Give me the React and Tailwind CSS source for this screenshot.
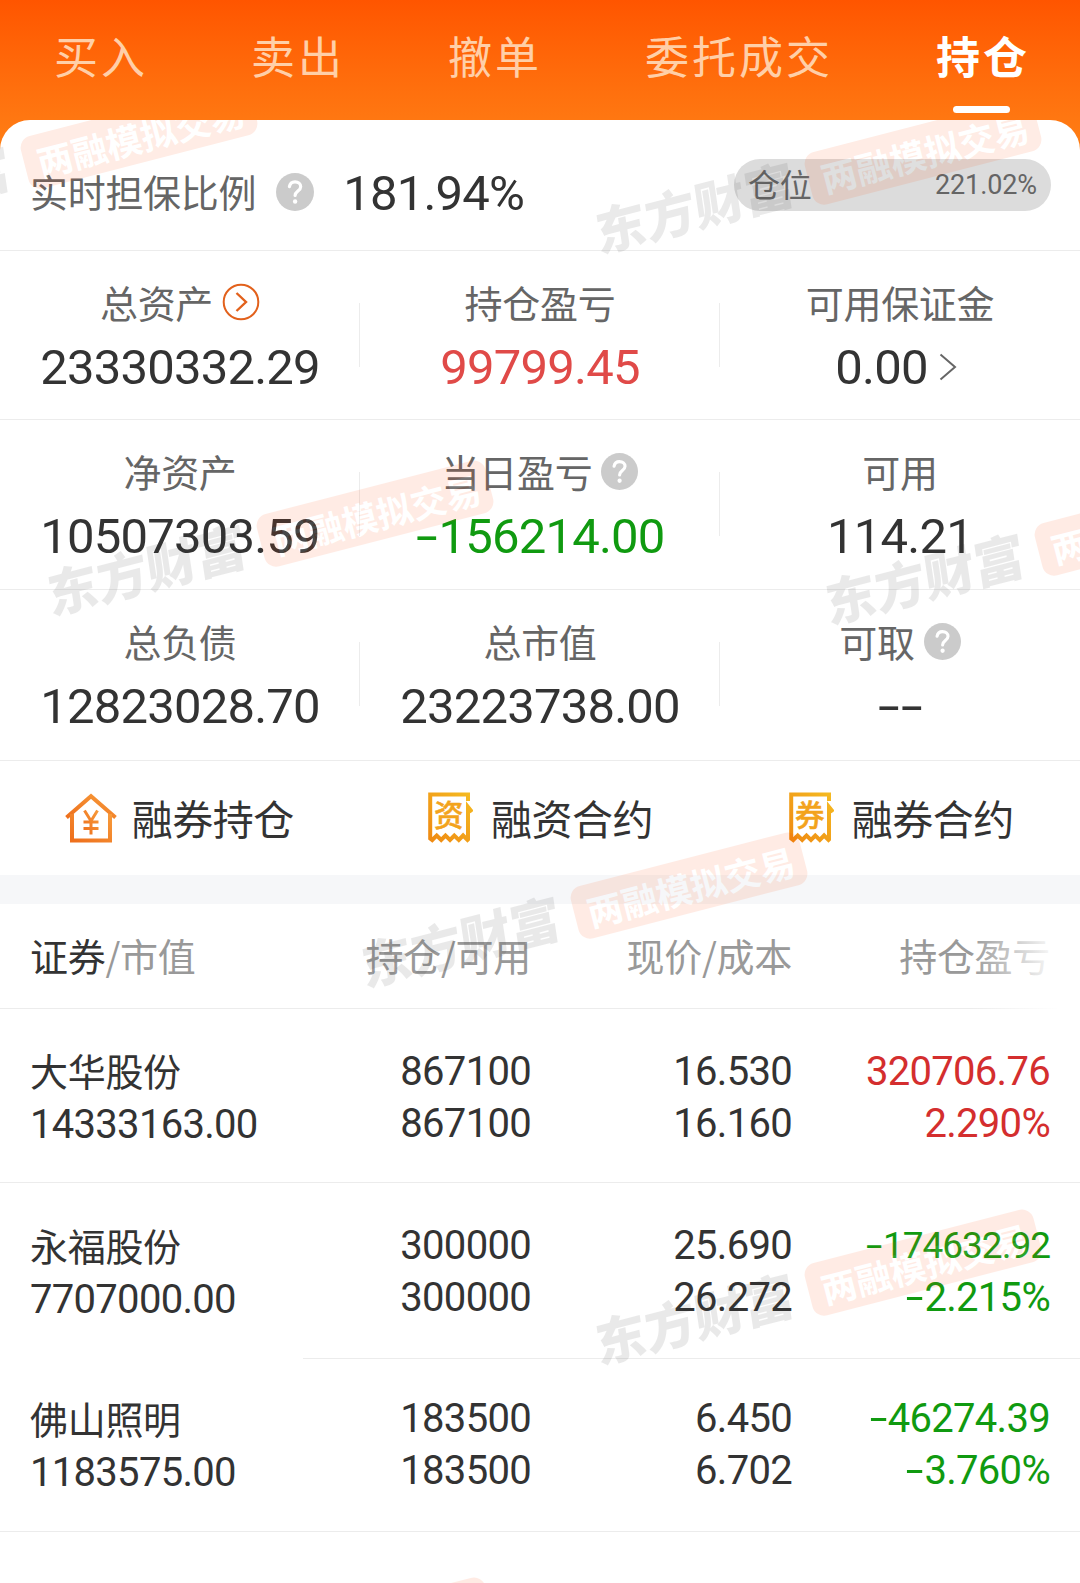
import clsx from "clsx";

const tabs = ["买入", "卖出", "撤单", "委托成交", "持仓"];

const stats = [
  [
    { label: "总资产", value: "23330332.29", more: true },
    { label: "持仓盈亏", value: "99799.45", color: "text-[#e04a48]" },
    { label: "可用保证金", value: "0.00", link: true },
  ],
  [
    { label: "净资产", value: "10507303.59" },
    { label: "当日盈亏", value: "-156214.00", color: "text-[#109a10]", help: true },
    { label: "可用", value: "114.21" },
  ],
  [
    { label: "总负债", value: "12823028.70" },
    { label: "总市值", value: "23223738.00" },
    { label: "可取", value: "--", help: true },
  ],
];

const statHeights = ["h-[169px]", "h-[170px]", "h-[171px]"];

const holdings = [
  {
    name: "大华股份",
    value: "14333163.00",
    amount: ["867100", "867100"],
    price: ["16.530", "16.160"],
    profit: ["320706.76", "2.290%"],
    color: "text-[#d42e2e]",
    size: "h-[174px] pt-[37px]",
    offset: "-mt-[2px]",
  },
  {
    name: "永福股份",
    value: "7707000.00",
    amount: ["300000", "300000"],
    price: ["25.690", "26.272"],
    profit: ["-174632.92", "-2.215%"],
    color: "text-[#109a10]",
    size: "h-[176px] pt-[37px]",
    offset: "-mt-px",
    small: true,
    shortLine: true,
  },
  {
    name: "佛山照明",
    value: "1183575.00",
    amount: ["183500", "183500"],
    price: ["6.450", "6.702"],
    profit: ["-46274.39", "-3.760%"],
    color: "text-[#109a10]",
    size: "h-[173px] pt-[34px]",
    offset: "-mt-px",
  },
];

const watermarks = [
  { x: 33, y: 43 },
  { x: 817, y: 59 },
  { x: 269, y: 421 },
  { x: 1047, y: 430 },
  { x: 583, y: 793 },
  { x: 817, y: 1170 },
  { x: 269, y: 1538 },
];

// the minus sign is drawn wider than the font's own hyphen
const Num = ({ children, className }) => (
  <span className={clsx("font-['Roboto',sans-serif] whitespace-nowrap", className)}>
    {children
      .split(/(-)/)
      .filter(Boolean)
      .map((part, i) =>
        part === "-" ? (
          <span key={i} className="inline-block w-[0.47em] text-center tracking-normal">
            <span className="inline-block scale-x-[1.6]">-</span>
          </span>
        ) : (
          part
        )
      )}
  </span>
);

const HelpIcon = ({ className }) => (
  <svg viewBox="0 0 38 38" className={className}>
    <circle cx="19" cy="19" r="19" fill="#cbcbcb" />
    <path
      d="M13.4 13.6c.6-3.200 2.700-4.800 5.600-4.800 3.300 0 5.700 2 5.700 4.900 0 4.200-5.600 4.500-5.600 8.800"
      fill="none"
      stroke="#fff"
      strokeWidth="3.200"
      strokeLinecap="round"
    />
    <circle cx="19.100" cy="28.500" r="2.200" fill="#fff" />
  </svg>
);

const CircleArrow = () => (
  <svg viewBox="0 0 38 38" className="size-[38px]">
    <circle cx="19" cy="19" r="17.300" fill="none" stroke="#e2611c" strokeWidth="2" />
    <path d="M14.500 10l9.500 9-9.500 9" fill="none" stroke="#e2611c" strokeWidth="2.400" />
  </svg>
);

const HouseIcon = () => (
  <svg viewBox="0 0 52 52" className="h-[52px] w-[52px]">
    <defs>
      <linearGradient id="house" x1="0" y1="1" x2="1" y2="0">
        <stop offset="0" stopColor="#ee6f1c" />
        <stop offset="1" stopColor="#f79a3a" />
      </linearGradient>
    </defs>
    <g fill="none" stroke="url(#house)" strokeWidth="4">
      <path d="M1.500 25.500L26 4.200l24.500 21.300" />
      <path d="M7 22v26.500h38V22" />
      <path d="M19.500 18.500L26 29l6.500-10.500M26 28.500v14M18.500 30h15M18.500 36.500h15" strokeWidth="3" />
    </g>
  </svg>
);

const ReceiptIcon = ({ char }) => (
  <svg viewBox="0 0 46 52" className="h-[52px] w-[46px]">
    <defs>
      <linearGradient id="receipt" x1="0" y1="1" x2="1" y2="0">
        <stop offset="0" stopColor="#ef8a12" />
        <stop offset="1" stopColor="#f5bb22" />
      </linearGradient>
    </defs>
    <path
      d="M41 9V2.500H3.200V46.500l2 1.500 4.500-4.500 4.500 4.500 4.300-4.500 4.500 4.500 4.300-4.500 4.500 4.500 4.300-4.500 4.400 4.500.5-.500V15l4 5"
      fill="none"
      stroke="url(#receipt)"
      strokeWidth="4"
    />
    <text
      x="21.500"
      y="34"
      textAnchor="middle"
      fontSize="29.500"
      fontWeight="500"
      fill="#f3a31c"
      stroke="#f3a31c"
      strokeWidth="0.500"
      fontFamily="'Noto Sans CJK SC', sans-serif"
    >
      {char}
    </text>
  </svg>
);

const actions = [
  { label: "融券持仓", icon: <HouseIcon />, gap: "gap-[15px] pr-[2px]" },
  { label: "融资合约", icon: <ReceiptIcon char="资" />, gap: "gap-[18px] pr-[2px]" },
  { label: "融券合约", icon: <ReceiptIcon char="券" />, gap: "gap-[18px]" },
];

const Watermark = ({ x, y }) => (
  <div
    className="absolute flex h-[54px] w-[455px] -translate-x-1/2 -translate-y-1/2 -rotate-[14.5deg] items-center justify-between opacity-10"
    style={{ left: x, top: y }}
  >
    <span className="mb-[10px] -skew-x-6 text-[51px] leading-none font-black whitespace-nowrap text-[#333]">
      东方财富
    </span>
    <span className="flex h-[54px] w-[236px] items-center justify-center rounded-xl bg-[#ff4500] pt-[2px] pl-[3px] text-[35.500px] leading-none font-bold whitespace-nowrap text-white">
      两融模拟交易
    </span>
  </div>
);

const StatCell = ({ stat, divider }) => (
  <div className="relative flex flex-1 flex-col items-center pt-[26px]">
    <div className="flex h-[50px] items-center gap-[9px] text-[38px] leading-[50px] tracking-[-0.3px] text-[#666]">
      {stat.label}
      {stat.more && <CircleArrow />}
      {stat.help && <HelpIcon className="size-[37px]" />}
    </div>
    <div className="mt-[16px] flex h-[50px] items-center gap-[11px]">
      <Num
        className={clsx(
          "text-[49px] leading-[50px] tracking-[-0.8px]",
          stat.color || "text-[#333]"
        )}
      >
        {stat.value}
      </Num>
      {stat.link && (
        <svg viewBox="0 0 18 28" className="mr-[8px] mb-[3px] h-[28px] w-[18px]">
          <path d="M1.500 1.500L16 14 1.500 26.500" fill="none" stroke="#666" strokeWidth="2" />
        </svg>
      )}
    </div>
    {divider && <div className="absolute top-[52px] right-0 h-[64px] w-px bg-[#ececec]" />}
  </div>
);

const Pair = ({ values, className, small }) => (
  <div className={clsx("flex flex-col text-right text-[40px] leading-[52px]", className)}>
    <Num className={clsx("h-[52px]", small ? "text-[37px] tracking-[-1px]" : "tracking-[-0.7px]")}>
      {values[0]}
    </Num>
    <Num className="h-[52px] tracking-[-0.7px]">{values[1]}</Num>
  </div>
);

const HoldingRow = ({ item }) => (
  <div className={clsx("relative flex px-[30px]", item.size)}>
    <div className={clsx("w-[270px] leading-[52px] text-[#333]", item.offset)}>
      <div className="h-[55px] text-[38px] tracking-[-0.3px]">{item.name}</div>
      <Num className="block text-[40px] tracking-[-0.7px]">{item.value}</Num>
    </div>
    <Pair values={item.amount} className="w-[231px] text-[#333]" />
    <Pair values={item.price} className="w-[261px] text-[#333]" />
    <Pair values={item.profit} small={item.small} className={clsx("flex-1", item.color)} />
    <div
      className={clsx(
        "absolute right-0 bottom-0 h-px bg-[#ececec]",
        item.shortLine ? "left-[303px]" : "left-0"
      )}
    />
  </div>
);

const App = () => {
  return (
    <div className="h-[1583px] w-[1080px] overflow-hidden bg-linear-to-b from-[#ff5500] from-0% to-[#ff7f15] to-[150px] font-['Noto_Sans_CJK_SC',sans-serif]">
      <nav className="flex h-[120px] justify-between pr-[50px] pl-[54px] text-[44px] leading-[66px] tracking-[3px] text-[#ffcfa8]">
        {tabs.map((tab, i) => (
          <div
            key={tab}
            className={clsx(
              "flex flex-col items-center pt-[22px]",
              i === 4 && "font-bold text-white"
            )}
          >
            {tab}
            {i === 4 && <div className="mt-[18px] mr-[3px] h-[7px] w-[57px] rounded-full bg-white" />}
          </div>
        ))}
      </nav>

      <main className="relative h-[1463px] overflow-hidden rounded-t-[30px] bg-white">
        <section className="flex h-[131px] items-start border-b border-[#ececec] pr-[29px] pl-[30px]">
          <span className="mt-[46px] text-[38px] leading-[50px] tracking-[-0.3px] text-[#666]">
            实时担保比例
          </span>
          <HelpIcon className="mt-[53px] ml-[20px] size-[38px]" />
          <Num className="mt-[49px] ml-[29px] text-[49px] leading-[50px] tracking-[-0.8px] text-[#333]">
            181.94%
          </Num>
          <div className="mt-[39px] ml-auto flex h-[52px] w-[317px] items-center justify-between rounded-full bg-[#dcdcdc] px-[14px] text-[#666]">
            <span className="pb-[4px] text-[32px] leading-[48px] tracking-[-0.3px]">仓位</span>
            <Num className="text-[27px] tracking-[-0.1px]">221.02%</Num>
          </div>
        </section>

        {stats.map((row, i) => (
          <section key={i} className={clsx("flex border-b border-[#ececec]", statHeights[i])}>
            {row.map((stat, j) => (
              <StatCell key={stat.label} stat={stat} divider={j < 2} />
            ))}
          </section>
        ))}

        <section className="flex h-[114px]">
          {actions.map((action) => (
            <div
              key={action.label}
              className={clsx(
                "flex flex-1 items-center justify-center text-[41px] tracking-[-0.5px] text-[#333]",
                action.gap
              )}
            >
              {action.icon}
              <span className="pb-[3px] leading-[60px]">{action.label}</span>
            </div>
          ))}
        </section>

        <div className="h-[29px] bg-[#f6f7f9]" />

        <section className="relative flex h-[105px] items-center border-b border-[#ececec] px-[30px] pb-[4px] text-[38px] tracking-[-0.3px] text-[#999]">
          <div className="w-[270px]">
            <span className="text-[#333]">证券</span>/市值
          </div>
          <div className="w-[231px] text-right">持仓/可用</div>
          <div className="w-[261px] text-right">现价/成本</div>
          <div className="flex-1 text-right">持仓盈亏</div>
          <div className="absolute top-0 right-0 -bottom-px w-[110px] bg-linear-to-r from-white/0 to-white to-[88px]" />
        </section>

        {holdings.map((item) => (
          <HoldingRow key={item.name} item={item} />
        ))}

        <div className="pointer-events-none absolute inset-0">
          {watermarks.map((mark, i) => (
            <Watermark key={i} x={mark.x} y={mark.y} />
          ))}
        </div>
      </main>
    </div>
  );
};

export default App;
